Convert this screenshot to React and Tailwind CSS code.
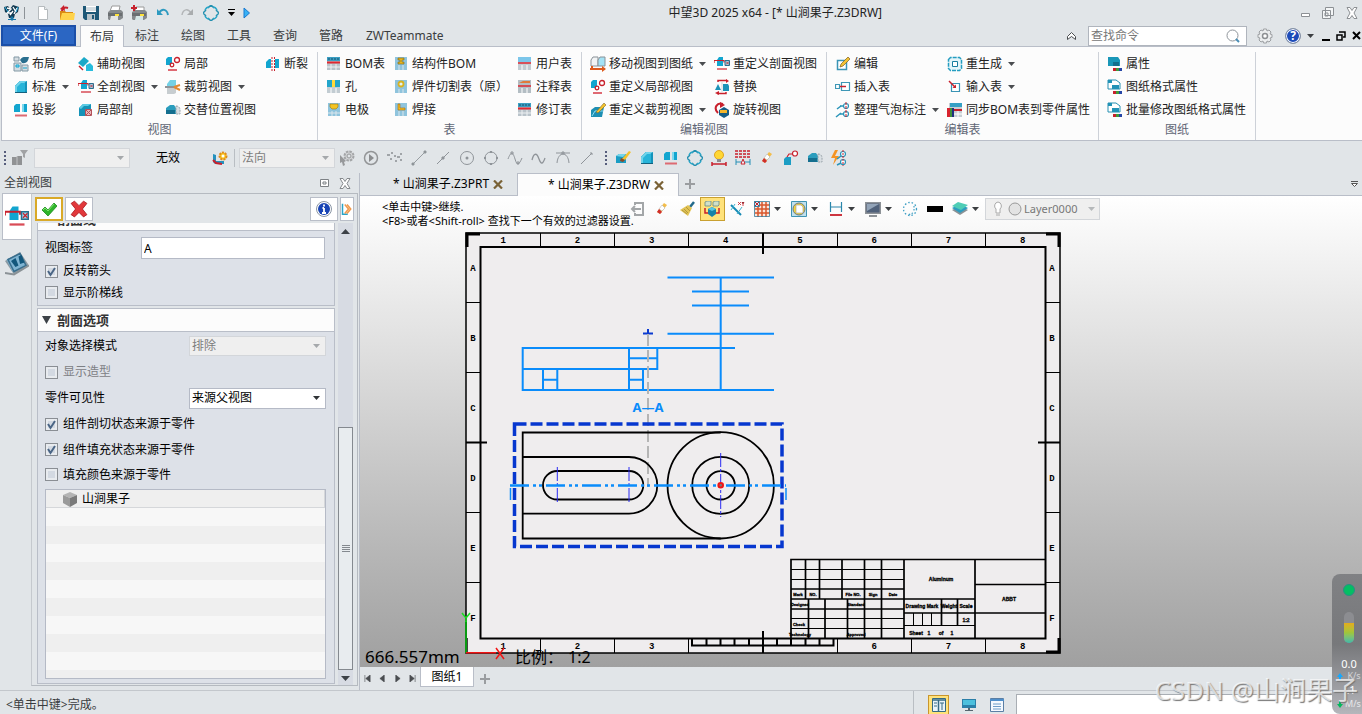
import { Fragment } from "react";

const B = "#12a5cf";
const N = "#2a6f8f";
const R = "#c8202c";
const G = "#8f9499";

// 16x16 icon drawings
const glyphs = {
  logo: (
    <>
      <path d="M0 2l4-1 2 3 3-4 6 2-1 5-3 2-1 4H5L4 9 1 7z" fill="#123a52" />
      <path d="M3 3l4 1-4 4 5 0M9 2l3 5M13 3l-3 6M6 10l3-4" stroke="#fff" strokeWidth="1.3" fill="none" />
      <path d="M4 14.500h8M7 12h2v3H7z" stroke="#1b78a8" fill="#1b78a8" />
      <path d="M1 2l3 5M14 2l-2 5" stroke="#39b7e6" />
    </>
  ),
  file: (
    <>
      <path d="M3.500 1.500h6l3 3v10h-9z" fill="#fff" stroke="#b5babd" />
      <path d="M9.500 1.500v3h3" fill="#e9edef" stroke="#b5babd" />
    </>
  ),
  open: (
    <>
      <path d="M1 6h5l1 1h7v8H1z" fill="#d98a12" />
      <path d="M1 15l2-7h13l-1 7z" fill="#ffd34a" />
      <path d="M3 6c0-3 3-4 6-3" stroke={R} strokeWidth="2" fill="none" />
      <path d="M5 0L1 4l5 2z" fill={R} />
    </>
  ),
  save: (
    <>
      <path d="M0 1h16v14H2l-2-2z" fill="#1d5877" />
      <path d="M3 1h10v6H3z" fill="#fff" />
      <path d="M3 3h10M3 5h10" stroke="#a8bac4" />
      <path d="M4 9h8v6H4z" fill="#b9c5cb" />
      <path d="M9 10h2v4H9z" fill="#1d5877" />
    </>
  ),
  print: (
    <>
      <path d="M5 1h8l-1 5H3z" fill="#fff" stroke="#9a9a9a" />
      <path d="M1 7l3-2h10l2 2v6l-3 2H2l-1-1z" fill="#85898c" />
      <path d="M1 8h14v3H1z" fill="#6a6e71" />
      <path d="M4 11h7v4H3z" fill="#e4e4e4" />
      <path d="M8 9h4v2H8z" fill="#ffe23a" />
    </>
  ),
  printAdd: (
    <>
      <path d="M5 2h8v4H4z" fill="#fff" stroke="#9a9a9a" />
      <path d="M1 7l3-2h10l2 2v6l-3 2H2l-1-1z" fill="#85898c" />
      <path d="M1 8h14v3H1z" fill="#6a6e71" />
      <path d="M5 11h7v4H4z" fill="#d6e6e6" />
      <path d="M9 9h4v2H9z" fill="#ffe23a" />
      <path d="M0 3h6M3 0v6" stroke={R} strokeWidth="2" />
    </>
  ),
  undo: (
    <>
      <path d="M4 8c3-5 8-4 9 2" stroke="#2d9ac0" strokeWidth="2" fill="none" />
      <path d="M2 4v6h6z" fill="#2d9ac0" />
    </>
  ),
  redo: (
    <>
      <path d="M12 8C9 3 4 4 3 10" stroke="#b3b6b8" strokeWidth="1.500" fill="none" />
      <path d="M14 4v6H8z" fill="#a9acae" />
    </>
  ),
  around: (
    <>
      <path d="M5 3l3-3 3 3M13 5l3 3-3 3M5 13l3 3 3-3M3 5L0 8l3 3" stroke="#2490b0" strokeWidth="1.500" fill="none" />
      <path d="M2 5c1-2 2-3 4-3M14 5c-1-2-2-3-4-3M2 11c1 2 2 3 4 3M14 11c-1 2-2 3-4 3" stroke="#2aa5c7" strokeWidth="1.500" fill="none" />
    </>
  ),
  play: <path d="M5 3l5.500 5L5 13z" fill="#38b2f5" stroke="#1878d0" />,
  layout: (
    <>
      <path d="M1 1h5v4H1zM1 7h7v8H1zM9 9h6v6H9z" fill="#d5dde2" stroke="#8298a4" />
      <path d="M7 4c2-4 5-3 9-3-1 5-3 7-7 6z" fill={N} />
      <path d="M3 9h3v2H3zM10 12h4" stroke={B} fill="#9adcf0" />
    </>
  ),
  view: (
    <>
      <path d="M2 7l5-5h7v12H2z" fill="#1593ba" />
      <path d="M2 7l5-5h5v11H2z" fill="#27b4d9" />
      <path d="M2 7l5-5h7l-3 2H8L4 8v5H2z" fill="#6fd3ea" />
      <path d="M2 13.500h12" stroke="#13617e" />
    </>
  ),
  project: (
    <>
      <path d="M1 4l2-2h4v8H1z" fill={B} />
      <path d="M9 2h5v8H9z" fill={B} />
      <path d="M9 2h2v8H9z" fill="#7fd9ee" />
      <path d="M2 13.500h12" stroke="#dd6a72" strokeWidth="2" />
    </>
  ),
  aux: (
    <>
      <path d="M0 7l6-6 5 4-6 6z" fill="#1ba9c8" />
      <path d="M8 9l4-2 3 3v5H8z" fill="#27bcdc" />
      <path d="M1 10l4 4" stroke={R} strokeWidth="1.500" />
    </>
  ),
  section: (
    <>
      <path d="M3 4l2-3h4v9H3z" fill={B} />
      <path d="M0 7V4.500h10v2" stroke={R} strokeWidth="1.200" fill="none" />
      <path d="M11 4.500h4.500v5H11z" fill="#9fd3e6" stroke={N} />
      <path d="M12 5.500l3 3m0-3l-3 3" stroke={R} strokeWidth=".8" />
      <path d="M3 13h10" stroke="#d94c57" strokeWidth="1.500" />
    </>
  ),
  cutout: (
    <>
      <path d="M1 6l4-4h8v12H1z" fill="#1593b8" />
      <path d="M1 6l4-4h8l-3 2H6L3 7z" fill="#5bcbe4" />
      <path d="M7.500 7.500h6v6h-6z" fill="#e9b9bc" stroke="#b4525a" />
      <path d="M8 8l5 5m0-5l-5 5" stroke="#b4525a" />
    </>
  ),
  detail: (
    <>
      <path d="M1 3l2-2h4v8H1z" fill={B} />
      <circle cx="12" cy="4" r="2.500" fill="#fff" stroke={R} strokeWidth="1.300" />
      <circle cx="7" cy="9" r="1.800" fill="#fff" stroke={R} strokeWidth="1.300" />
      <path d="M3 14h9" stroke="#dc5962" strokeWidth="1.800" />
    </>
  ),
  clip: (
    <>
      <path d="M2 5l3-4h6v6H2z" fill="#73d1e6" />
      <path d="M2 9h9v5l-2 1H2z" fill="#c7cdd0" />
      <path d="M0 8h10" stroke="#6b7176" strokeWidth="1.500" />
      <path d="M9 8l6-2M9 8l6 3" stroke="#e08a35" strokeWidth="2" />
    </>
  ),
  alternate: (
    <>
      <path d="M1 12V6l4-3h4l2 3v6z" fill="#2b9dbd" />
      <path d="M1 12V8h9v4z" fill="#156f8f" />
      <path d="M11 4c3 0 4 2 4 4v4h-4z" fill="#d9dfe3" stroke="#9aa4aa" strokeDasharray="2 1" />
    </>
  ),
  broken: (
    <>
      <path d="M1 6l3-3h2v9H1z" fill={B} />
      <path d="M10 3h4v9h-4z" fill={B} />
      <path d="M7 1v14M9.500 1v14" stroke={R} strokeDasharray="2 1" />
    </>
  ),
  bom: (
    <>
      <path d="M1 1h13v13H1z" fill="#b9c3ca" />
      <path d="M1 1h13v4H1z" fill="#3b9ec2" />
      <path d="M3 2v2M6 2v2M9 2v2M12 2v2" stroke="#14516d" />
      <path d="M1 6.500h13" stroke="#e12730" strokeWidth="2" />
      <path d="M5 8v6M10 8v6M1 11h13" stroke="#eef1f3" />
    </>
  ),
  hole: (
    <>
      <path d="M1 1h13v13H1z" fill="#c2ccd2" />
      <path d="M1 1h13v7H1z" fill="#22a5cb" />
      <path d="M6 1h3v7H6z" fill="#ffd93a" />
      <path d="M5 9v5M10 9v5" stroke="#fff" />
    </>
  ),
  electrode: (
    <>
      <path d="M2 1h12v13H2z" fill="#8fc4dd" />
      <path d="M4 2h8v3l-2 2H6L4 5z" fill="#f3c322" stroke="#9b7a12" strokeWidth=".6" />
      <path d="M6 9v5M10 9v5M2 11h12" stroke="#dbe6ec" />
    </>
  ),
  weld: (
    <>
      <path d="M2 1h12v13H2z" fill="#8fc4dd" />
      <path d="M5 2v6h7V6H7V2z" fill="#f5bd1e" stroke="#a56b14" strokeWidth=".6" />
      <path d="M6 9v5M10 9v5" stroke="#dbe6ec" />
    </>
  ),
  struct: (
    <>
      <path d="M2 1h12v13H2z" fill="#8fc4dd" />
      <path d="M5 2h6v2H9v2h2v2H5V6h2V4H5z" fill="#e6b51f" stroke="#7d6614" strokeWidth=".6" />
      <path d="M6 9v5M10 9v5" stroke="#dbe6ec" />
    </>
  ),
  cutlist: (
    <>
      <path d="M2 1h12v13H2z" fill="#8fc4dd" />
      <circle cx="8" cy="5" r="2.500" fill="#dff1f8" stroke="#d8b321" strokeWidth="1.800" />
      <path d="M6 10v4M10 10v4" stroke="#dbe6ec" />
    </>
  ),
  table: (
    <>
      <path d="M1 1h13v13H1z" fill="#c3ccd2" />
      <path d="M1 1h13v5H1z" fill="#7cc6ea" />
      <path d="M1 7h13" stroke="#e12730" strokeWidth="1.500" />
      <path d="M5 9v5M10 9v5" stroke="#fff" />
    </>
  ),
  note: (
    <>
      <path d="M1 1h13v13H1z" fill="#b3bdc3" />
      <path d="M2 4l4-2 7 0v2H2z" fill="#e07a39" />
      <path d="M1 7h13" stroke="#e12730" strokeWidth="1.500" />
      <path d="M5 9v5M10 9v5" stroke="#fff" />
    </>
  ),
  moveView: (
    <>
      <path d="M1 4l2-3h5v9H1z" fill="#f2f4f5" stroke="#8a9298" />
      <path d="M8 4l2-3h5v9H8z" fill="#a4e2f5" stroke="#8a9298" />
      <path d="M2 10v3M0 13h15" stroke="#dd5a1d" strokeWidth="2" />
      <path d="M12 10l4 3-4 3z" fill="#dd5a1d" />
    </>
  ),
  pen: (
    <>
      <path d="M1 8l4-3h9l-2 10H1z" fill="#1e8fb3" />
      <path d="M2 14l3-5h8" stroke="#8bdcf0" fill="none" />
      <path d="M6 10l8-9 2 2-8 8z" fill="#f4c22c" stroke="#7d6a2b" strokeWidth=".6" />
    </>
  ),
  replace: (
    <>
      <path d="M1 11l3-6 3 6zM9 5h5l1 2v5H9z" fill="#1b93b8" />
      <path d="M4 3V1.500h9M12 13v1.500H3" stroke={R} strokeWidth="1.500" fill="none" />
      <path d="M12 0l3 2-3 2zM5 12l-4 2 4 2z" fill={R} />
      <path d="M8 3v10" stroke="#d0d7db" />
    </>
  ),
  rotate: (
    <>
      <path d="M9 2C3 0-1 6 4 11" stroke={R} strokeWidth="2" fill="none" />
      <path d="M6 0l5 3-5 3z" fill={R} />
      <path d="M5 8l5-3 5 3v5l-5 3-5-3z" fill="#155d86" />
      <path d="M6 8h7v3H6z" fill="#f4b62a" />
    </>
  ),
  edit: (
    <>
      <path d="M2.500 4.500h9v9h-9z" fill="#fff" stroke="#3a94b5" strokeWidth="1.500" />
      <path d="M5 11l1-3 7-7 2 2-7 7z" fill="#f2c233" stroke="#7d5e20" strokeWidth=".7" />
    </>
  ),
  insert: (
    <>
      <path d="M.500 5.500h4v4h-4zM6.500 3.500h8v8h-8z" fill="#fff" stroke="#3e97b6" strokeWidth="1.200" />
      <path d="M5 7.500h6" stroke={R} strokeWidth="1.500" />
    </>
  ),
  bubble: (
    <>
      <path d="M2 7l4-3M1 15l5-4" stroke="#2a94b8" strokeWidth="1.500" />
      <path d="M5 4h4M5 12h4" stroke="#2a94b8" strokeWidth="1.500" />
      <circle cx="11" cy="4" r="2.500" fill="#fff" stroke="#2a94b8" strokeWidth="1.200" />
      <circle cx="11" cy="12" r="2.500" fill="#fff" stroke="#2a94b8" strokeWidth="1.200" />
      <path d="M11 0v16" stroke={R} strokeDasharray="3 1" />
    </>
  ),
  regen: (
    <>
      <path d="M1.500 3.500l2-2h9l2 2v9l-2 2h-9l-2-2z" fill="#e4f5fa" stroke="#249dc0" strokeWidth="1.500" strokeDasharray="4 1" />
      <path d="M5.500 5.500h5v5h-5z" fill="#fff" stroke="#187ea0" />
    </>
  ),
  input: (
    <>
      <path d="M4.500 4.500h8v8h-8z" fill="#fff" stroke="#3a94b5" strokeWidth="1.200" />
      <path d="M2 2l6 6" stroke={R} strokeWidth="1.500" fill="none" />
      <path d="M9 9V5.500L5.500 9z" fill={R} />
    </>
  ),
  sync: (
    <>
      <path d="M2 1h13v14H2z" fill="#c6ced3" />
      <path d="M3 1h12v4H3z" fill="#34a0c4" />
      <path d="M0 6h3v9H0z" fill="#d8232e" />
      <path d="M3 6h2v9H3z" fill="#3e8f3a" />
      <path d="M5 6h2v9H5z" fill="#202f80" />
      <path d="M7 8h8" stroke={R} strokeWidth="2" />
      <path d="M11 9v6M7 12h8" stroke="#fff" />
    </>
  ),
  prop: (
    <>
      <path d="M1 1h10l2 3v6H1z" fill="#1a97b8" />
      <path d="M6 6h6v4H6z" fill="#136f8c" />
      <path d="M6 12h3v3H6z" fill={R} />
      <path d="M9 12h3v3H9z" fill="#3f9a3a" />
      <path d="M12 12h3v3h-3z" fill="#2646a6" />
    </>
  ),
  sheetProp: (
    <>
      <path d="M1 1h8l4 3v6H1z" fill="#fff" stroke="#2790b2" />
      <path d="M1 1h4v3H1zM5 6h7v4H5z" fill="#2192b6" />
      <path d="M6 12h3v3H6z" fill={R} />
      <path d="M9 12h3v3H9z" fill="#3f9a3a" />
      <path d="M12 12h3v3h-3z" fill="#2646a6" />
    </>
  ),
  filter: (
    <>
      <path d="M0 7h5v8H0zM5 6h5v9H5z" fill="#909294" />
      <path d="M5 6v9" stroke="#c0c2c4" />
      <path d="M8 0h8l-3 4v4l-2-1V4z" fill="#a0a2a4" />
    </>
  ),
  attach: (
    <>
      <path d="M1 4l3 1v6h8v3H3l-2-2z" fill="#2591bd" />
      <path d="M1 10l3 3 6 1" stroke={R} strokeWidth="2" fill="none" />
      <circle cx="11" cy="6" r="3.500" fill="#f8c41f" stroke="#e08a1c" strokeWidth="2" strokeDasharray="2 1" />
      <circle cx="11" cy="6" r="1.500" fill="#fff" />
    </>
  ),
  gearCursor: (
    <>
      <circle cx="10" cy="6" r="4.500" fill="#d2d4d6" stroke="#a3a5a7" strokeWidth="2" strokeDasharray="2.500 1" />
      <circle cx="10" cy="6" r="2" fill="#e1e5e8" stroke="#97999b" />
      <path d="M1 5l6 6-2 1 1 3-2 1-1-4-2 1z" fill="#97999b" />
    </>
  ),
  circPlay: (
    <>
      <circle cx="8" cy="8" r="6.500" fill="none" stroke="#939597" strokeWidth="1.500" />
      <path d="M6 4l5 4-5 4z" fill="#8b8d8f" />
    </>
  ),
  dots: <path d="M0 5h3M3 9h2M7 6h2M8 11h2M10 7h3M13 4h2M13 10h2M4 3h2" stroke="#a0a4a8" strokeWidth="2" />,
  line: <path d="M2 14L14 2M1 13h2v2H1zM13 1h2v2h-2z" stroke={G} fill={G} strokeWidth=".9" />,
  midpoint: <path d="M2 14L14 2M7 7h2v2H7z" stroke={G} fill={G} />,
  center: (
    <>
      <circle cx="8" cy="8" r="6.500" fill="none" stroke={G} />
      <circle cx="8" cy="8" r="1.500" fill={G} />
    </>
  ),
  quad: (
    <>
      <circle cx="8" cy="8" r="6" fill="none" stroke={G} />
      <path d="M7 1h2v2H7zM7 13h2v2H7zM1 7h2v2H1zM13 7h2v2h-2z" fill={G} />
    </>
  ),
  wave: <path d="M1 9c3-8 5-7 7 0s4 6 7-1M4 2h2v2H4zM10 12h2v2h-2z" stroke={G} fill="none" />,
  wave2: <path d="M1 10c2-8 5-7 7-1s4 5 6-1" stroke={G} strokeWidth="1.300" fill="none" />,
  arcTop: <path d="M1 3h14M2 13c1-12 11-12 12 0M7 2h2v2H7z" stroke={G} fill="none" />,
  slash: <path d="M2 14L13 3M11 3h2v2M6 9l1 1" stroke={G} fill="none" />,
  paint: (
    <>
      <path d="M1 6l3-2h7v9H1z" fill="#1a9dc4" />
      <path d="M1 6l3-2h7l-3 3z" fill="#75d4e9" />
      <path d="M7 9l7-8 2 1-6 8z" fill="#f4c22c" />
      <path d="M6 8l4 2-2 2-3-1z" fill="#8b4a24" />
    </>
  ),
  bulb: (
    <>
      <circle cx="8" cy="5" r="4.500" fill="#ffd734" stroke="#e0a520" />
      <path d="M6 9h4v3H6z" fill="#8b8e90" />
      <path d="M1 12v4M15 12v4M1 14h14" stroke={R} strokeWidth="1.500" />
    </>
  ),
  dimGrid: (
    <>
      <path d="M0 1h16M0 4h16M0 7h16" stroke={R} strokeWidth="1.500" strokeDasharray="3 1" />
      <path d="M1 9v6M15 9v6M1 12h14" stroke="#268fb5" />
      <path d="M6 14l2-5 2 5z" fill="#fff" stroke={R} />
    </>
  ),
  eraser: (
    <>
      <path d="M3 11l7-9 3 2-7 9z" fill="#f3bd49" />
      <path d="M5 8l3-4 3 3-3 3z" fill="#fff" stroke="#a8a8a8" strokeWidth=".5" />
      <path d="M3 11l2-3 3 3-2 2z" fill="#cf2d2d" />
    </>
  ),
  tagBox: (
    <>
      <path d="M1 9l2-2h5v8H1z" fill="#1b9dc4" />
      <path d="M4 7l2-3h4" stroke={R} strokeWidth="1.200" fill="none" />
      <circle cx="12" cy="3.500" r="2.500" fill="#fff" stroke={R} strokeWidth="1.200" />
    </>
  ),
  flash: (
    <>
      <path d="M4 0L0 8h4l-2 7 6-9H4l3-6z" fill="#f59423" />
      <circle cx="12" cy="4" r="2.500" fill="#fff" stroke="#2a94b8" strokeWidth="1.200" />
      <circle cx="12" cy="12" r="2.500" fill="#fff" stroke="#2a94b8" strokeWidth="1.200" />
      <path d="M6 9l4-3M6 15l4-2" stroke="#2a94b8" strokeWidth="1.500" />
      <path d="M12 0v16" stroke={R} strokeDasharray="2 1" />
    </>
  ),
  exit: <path d="M6 4V2h8v12H6v-2M12 8H4M6 5L3 8l3 3" stroke="#a3a6a8" strokeWidth="2" fill="none" />,
  broom: (
    <>
      <path d="M15 1l-4 5" stroke="#236a8a" strokeWidth="2.500" />
      <path d="M9 4l4 3-4 8-8-6z" fill="#e3c354" />
      <path d="M3 9l5 4M5 8l4 4M7 6l4 4" stroke="#a58f3a" strokeWidth=".8" />
    </>
  ),
  cubes: (
    <>
      <path d="M1 1l2-1h4v4L6 5H1zM9 1l2-1h4v4l-1 1H9z" fill="#cfe0c9" stroke="#688a80" strokeWidth=".8" />
      <path d="M4 8l4-2 4 2v5l-4 3-4-3z" fill="#1783a8" />
      <path d="M4 8l4-2 4 2-4 2z" fill="#58c6e0" />
      <path d="M1 7v5h3M15 7v5h-3" stroke={R} strokeWidth="1.500" fill="none" />
    </>
  ),
  axes: (
    <>
      <path d="M2 4l10 10" stroke="#1689b4" strokeWidth="2" />
      <path d="M2 9l4-6M8 13l5-7" stroke="#42b0ce" />
      <path d="M9 1l3 3m0-3L9 4M13 1l1 2 1-2M14 3v2" stroke={R} strokeWidth=".8" />
    </>
  ),
  grid: (
    <>
      <path d="M0 0h16v16H0z" fill="#fbe6dc" />
      <path d="M1 4h15M1 8h15M1 12h15M4 1v15M8 1v15M12 1v15" stroke="#d8572c" strokeWidth="1.500" />
      <path d="M.500 .500h5v5h-5z" fill="#d7ecf4" stroke="#3a7fa0" />
      <path d="M1 1l4 4m0-4L1 5" stroke={R} />
      <path d="M.500 .500h15v15H.500z" stroke="#3a7fa0" fill="none" strokeWidth=".8" />
    </>
  ),
  zoomPage: (
    <>
      <path d="M.500 .500h15v15H.500z" fill="#bfe0ee" stroke="#3f93b3" />
      <circle cx="8" cy="8" r="6" fill="#f4d53f" stroke="#6e7b82" />
      <path d="M5 4h5l2 2v6H5z" fill="#fff" stroke="#999" strokeWidth=".6" />
    </>
  ),
  dimension: (
    <>
      <path d="M2.500 1v10M13.500 1v10M3 6h10" stroke="#2a86ab" strokeWidth="1.200" />
      <path d="M2 14h12" stroke={R} strokeWidth="1.800" />
    </>
  ),
  monitor: (
    <>
      <path d="M0 1h16v12H0z" fill="#8d9297" />
      <path d="M1.500 2.500h13v9h-13z" fill="#50617a" />
      <path d="M2 3h12l-12 7z" fill="#93a4b8" />
      <path d="M4 15h8" stroke="#8d9297" strokeWidth="2" />
    </>
  ),
  dotRing: (
    <>
      <circle cx="8" cy="8" r="6.500" fill="none" stroke="#3f9fc4" strokeWidth="1.300" strokeDasharray="1.500 2" />
      <path d="M12 5v6M11 12L6 14" stroke="#3f9fc4" strokeWidth="1.200" strokeDasharray="1.500 1.500" />
    </>
  ),
  black: <path d="M0 5h16v6H0z" fill="#000" />,
  layers: (
    <>
      <path d="M0 9l8-4 8 4-8 5z" fill="#8b9296" />
      <path d="M0 7l8-4 8 4-8 5z" fill="#2d9dc0" />
      <path d="M0 5l6-4 10 3-7 5z" fill="#4fcdb6" />
    </>
  ),
  cube: (
    <>
      <path d="M1 4l7-3 7 3-7 3z" fill="#b4b4b4" />
      <path d="M1 4l7 3v9l-7-4z" fill="#9a9a9a" />
      <path d="M15 4L8 7v9l7-4z" fill="#7a7a7a" />
    </>
  ),
  check: (
    <>
      <path d="M1 9l3-3 3 3 6-7 3 3-9 10z" fill="#2fb52b" stroke="#1c8a1f" strokeWidth=".8" />
      <path d="M2 9l2-2 3 3 6-7" stroke="#7de56b" fill="none" />
    </>
  ),
  cross: (
    <path d="M1 3l3-2 4 4 4-4 3 2-4 5 4 5-3 2-4-4-4 4-3-2 4-5z" fill="#e2383b" stroke="#b01f25" strokeWidth=".8" />
  ),
  info: (
    <>
      <circle cx="8" cy="8" r="7.500" fill="#fff" stroke="#8b96a5" />
      <circle cx="8" cy="8" r="6" fill="#1844b4" />
      <path d="M8 7v5M6 12h4M6.500 7H8M8 3.500v2" stroke="#fff" strokeWidth="1.800" />
    </>
  ),
  expand: (
    <>
      <path d="M2 1v14h7" stroke="#2aa4c8" strokeWidth="2" fill="none" />
      <path d="M5 2l5 6-5 6M8 2l5 6-5 6" stroke="#f09a4e" strokeWidth="2" fill="none" />
    </>
  ),
  book: (
    <>
      <path d="M0 6l10-6 6 9-10 6z" fill="#8b9aa3" />
      <path d="M1 5l9-4 4 8-9 4z" fill="#7fb4d2" />
      <path d="M2 5l8-4 4 8-8 4z" fill="none" stroke="#3a6f8e" />
      <path d="M4 6l3-2 2 5-2 1zM9 3l2-1 2 5-3 1z" fill="#12577c" />
      <path d="M0 14l6 1 10-6" stroke="#8b9296" strokeWidth="1.200" fill="none" />
    </>
  ),
  pcStatus: (
    <>
      <path d="M1 2h14v9H1z" fill="#2b7fa8" />
      <path d="M2 3h12v5H2z" fill="#4cc0dd" />
      <path d="M7 11h2v2h3v1H4v-1h3z" fill="#56666f" />
    </>
  ),
  listStatus: (
    <>
      <path d="M1.500 1.500h13v13h-13z" fill="#f4f9ff" stroke="#5b7fa5" />
      <path d="M1 3h14" stroke="#4f8fcb" strokeWidth="2" />
      <path d="M4 7h8M4 9.500h8M4 12h8" stroke="#6d9cc8" />
    </>
  ),
  treeStatus: (
    <>
      <path d="M1.500 1.500h13v13h-13z" fill="#e8f4f9" stroke="#356a82" />
      <path d="M2 3h12M7.500 3v11" stroke="#356a82" strokeWidth="1.500" />
      <path d="M3 6h3M3 9h3M9 6h4M11 6v7" stroke="#356a82" />
    </>
  ),
};

function Icon({ name, className = "h-4 w-4" }) {
  return (
    <svg viewBox="0 0 16 16" className={`shrink-0 ${className}`} aria-hidden="true">
      {glyphs[name]}
    </svg>
  );
}

function Arrow({ className = "text-[#3c3f42]" }) {
  return (
    <svg viewBox="0 0 7 4" className={`h-1 w-[7px] shrink-0 ${className}`} aria-hidden="true">
      <path d="M0 0h7L3.500 4z" fill="currentColor" />
    </svg>
  );
}

const quickAccess = ["file", "open", "save", "print", "printAdd", "undo", "redo", "around"];
const tabs = ["标注", "绘图", "工具", "查询", "管路"];

const ribbon = [
  {
    title: "视图",
    width: "w-[316px]",
    pad: "pl-[11px]",
    cols: [
      { w: "w-[65px]", items: [["layout", "布局"], ["view", "标准", true], ["project", "投影"]] },
      { w: "w-[87px]", items: [["aux", "辅助视图"], ["section", "全剖视图", true], ["cutout", "局部剖"]] },
      { w: "w-[100px]", items: [["detail", "局部"], ["clip", "裁剪视图", true], ["alternate", "交替位置视图"]] },
      { w: "w-12", items: [["broken", "断裂"]] },
    ],
  },
  {
    title: "表",
    width: "w-[264px]",
    pad: "pl-2",
    cols: [
      { w: "w-[67px]", items: [["bom", "BOM表"], ["hole", "孔"], ["electrode", "电极"]] },
      { w: "w-[124px]", items: [["struct", "结构件BOM"], ["cutlist", "焊件切割表（原）"], ["weld", "焊接"]] },
      { w: "w-[60px]", items: [["table", "用户表"], ["note", "注释表"], ["bom", "修订表"]] },
    ],
  },
  {
    title: "编辑视图",
    width: "w-[245px]",
    pad: "pl-2",
    cols: [
      { w: "w-[124px]", items: [["moveView", "移动视图到图纸", true], ["detail", "重定义局部视图"], ["pen", "重定义裁剪视图", true]] },
      { w: "w-[108px]", items: [["section", "重定义剖面视图"], ["replace", "替换"], ["rotate", "旋转视图"]] },
    ],
  },
  {
    title: "编辑表",
    width: "w-[272px]",
    pad: "pl-2",
    cols: [
      { w: "w-28", items: [["edit", "编辑"], ["insert", "插入表"], ["bubble", "整理气泡标注", true]] },
      { w: "w-[144px]", items: [["regen", "重生成", true], ["input", "输入表", true], ["sync", "同步BOM表到零件属性"]] },
    ],
  },
  {
    title: "图纸",
    width: "w-[157px]",
    pad: "pl-2",
    cols: [{ w: "w-[144px]", items: [["prop", "属性"], ["sheetProp", "图纸格式属性"], ["sheetProp", "批量修改图纸格式属性"]] }],
  },
];

const snapTools = ["gearCursor", "circPlay", "dots", "line", "midpoint", "center", "quad", "wave", "wave2", "arcTop", "slash"];
const viewTools = ["paint", "view", "project", "around", "bulb", "dimGrid", "eraser", "tagBox", "alternate", "flash"];

function TitleBar() {
  return (
    <header className="flex h-[25px] items-center pl-1">
      <div className="flex flex-1 items-center">
        <Icon name="logo" />
        <span className="ml-1 h-3 w-px bg-[#8d9297]" />
        <div className="ml-1.5 flex items-center">
          {quickAccess.map((name) => (
            <button key={name} aria-label={name} className="flex h-6 w-6 items-center justify-center">
              <Icon name={name} />
            </button>
          ))}
          <button aria-label="more" className="flex w-4 flex-col items-center gap-0.5 text-black">
            <span className="h-px w-[7px] bg-black" />
            <Arrow className="text-black" />
          </button>
          <button aria-label="play" className="flex w-4 justify-center">
            <Icon name="play" />
          </button>
        </div>
      </div>
      <h1 className="shrink-0">中望3D 2025 x64 - [* 山涧果子.Z3DRW]</h1>
      <div className="flex w-[480px] items-center justify-end gap-3 pr-1 text-[#8c9094]">
        <button aria-label="minimize" className="mt-1">
          <svg viewBox="0 0 9 4" className="h-1 w-[9px]"><path d="M.500 .500h8v3h-8z" fill="#fff" stroke="currentColor" /></svg>
        </button>
        <button aria-label="restore">
          <svg viewBox="0 0 12 12" className="h-3 w-3"><path d="M3.500 .500h8v8h-8zM.500 3.500h8v8h-8zM3 6h3v3H3z" fill="#f4f6f7" stroke="currentColor" /></svg>
        </button>
        <button aria-label="close">
          <svg viewBox="0 0 12 12" className="h-3 w-3"><path d="M1 .500h3l2 3 2-3h3L8 6l3 5.500H8l-2-3-2 3H1L4 6z" fill="#fff" stroke="currentColor" /></svg>
        </button>
      </div>
    </header>
  );
}

function TabBar() {
  return (
    <nav className="flex h-[21px] items-stretch pl-px text-[#3a3d40]">
      <button className="mr-1 w-[75px] border-2 border-[#1b4fa8] bg-[#2b66c3] text-white">文件(F)</button>
      <button className="relative z-10 -mb-px w-11 border border-b-0 border-[#b9bec8] bg-[#fcfcfc]">布局</button>
      {tabs.map((tab) => (
        <button key={tab} className="w-[46px]">
          {tab}
        </button>
      ))}
      <button className="px-3">ZWTeammate</button>
      <div className="ml-auto flex items-center">
        <button aria-label="collapse" className="mr-3">
          <svg viewBox="0 0 9 8" className="h-2 w-[9px]"><path d="M.500 4.500l4-4 4 4v3l-4-3-4 3z" fill="#fff" stroke="#4a4d50" /></svg>
        </button>
        <label className="flex h-5 w-[159px] items-center border border-[#b0b5bd] bg-white pr-1.5">
          <input aria-label="查找命令" placeholder="查找命令" className="min-w-0 flex-1 px-0.5 outline-none placeholder:text-[#777]" />
          <svg viewBox="0 0 14 14" className="h-3.5 w-3.5"><circle cx="6.500" cy="6.500" r="5.500" fill="none" stroke="#8f959b" /><path d="M10 10l3 3" stroke="#4a8db5" strokeWidth="2" /></svg>
        </label>
        <button aria-label="settings" className="ml-2.5">
          <svg viewBox="0 0 16 16" className="h-4 w-4">
            <path
              d="M6.500 1h3l.5 2 2-1 2 2-1 2 2 .5v3l-2 .5 1 2-2 2-2-1-.5 2h-3L6 13l-2 1-2-2 1-2-2-.5v-3L3 6 2 4l2-2 2 1z"
              fill="#eceeef"
              stroke="#9c9fa2"
            />
            <circle cx="8" cy="8" r="2.500" fill="#fff" stroke="#8d9093" strokeWidth="1.500" />
          </svg>
        </button>
        <button aria-label="help" className="ml-3 flex items-center gap-1.5">
          <span className="flex h-4 w-4 items-center justify-center rounded-full border border-[#8b96a5] bg-[#1d4bb8] text-[12px] font-bold text-white ring-1 ring-white ring-inset">?</span>
          <Arrow />
        </button>
        <div className="ml-2 flex items-center gap-1.5 pr-px text-black">
          <svg viewBox="0 0 8 10" className="h-2.5 w-2"><path d="M0 9h8" stroke="currentColor" strokeWidth="2" /></svg>
          <svg viewBox="0 0 10 10" className="h-2.5 w-2.5"><path d="M3 1h6v5H7M1 4h5v5H1z" fill="none" stroke="currentColor" strokeWidth="1.500" /></svg>
          <svg viewBox="0 0 9 9" className="h-[9px] w-[9px]"><path d="M1 1l7 7M8 1L1 8" stroke="currentColor" strokeWidth="2" /></svg>
        </div>
      </div>
    </nav>
  );
}

function Ribbon() {
  return (
    <section className="ml-px flex h-[95px] border border-r-0 border-[#b9bec8] bg-[#fcfcfc] pt-[5px]">
      {ribbon.map((group) => (
        <div key={group.title} className={`flex shrink-0 flex-col border-r border-[#cdd1d8] ${group.width}`}>
          <div className={`flex ${group.pad}`}>
            {group.cols.map((col, i) => (
              <div key={i} className={`shrink-0 ${col.w}`}>
                {col.items.map(([icon, label, more]) => (
                  <button key={label} className="flex h-[23px] items-center whitespace-nowrap">
                    <Icon name={icon} />
                    <span className="ml-[3px]">{label}</span>
                    {more && <Arrow className="ml-1.5 text-[#4a4d50]" />}
                  </button>
                ))}
              </div>
            ))}
          </div>
          <h2 className="text-center leading-[18px] text-[#5f6675]">{group.title}</h2>
        </div>
      ))}
    </section>
  );
}

function Grip() {
  return (
    <svg viewBox="0 0 2 14" className="h-3.5 w-0.5 shrink-0" aria-hidden="true">
      <path d="M1 0v14" stroke="#565d7c" strokeWidth="2" strokeDasharray="2 2" />
    </svg>
  );
}

function Picker({ label, value, disabled, id, className }) {
  return (
    <div className={`relative flex items-center ${className}`}>
      <select
        id={id}
        aria-label={label}
        disabled={disabled}
        defaultValue={value}
        className="h-full w-full appearance-none border border-[#b5bac6] bg-white px-0.5 outline-none disabled:border-[#d3d6da] disabled:bg-[#efefef] disabled:text-[#7d7d7d]"
      >
        <option>{value}</option>
      </select>
      <Arrow className={`pointer-events-none absolute right-1.5 ${disabled ? "text-[#a5a8ab]" : "text-[#303336]"}`} />
    </div>
  );
}

function ToolRow() {
  return (
    <section className="flex h-8 items-center pl-1 pt-0.5">
      <Grip />
      <button aria-label="filter" className="ml-1.5">
        <Icon name="filter" />
      </button>
      <Picker label="过滤器" value="" disabled className="ml-1.5 h-5 w-24" />
      <span className="w-[82px] pl-[26px] text-black">无效</span>
      <button aria-label="attach">
        <Icon name="attach" />
      </button>
      <span className="ml-1.5 mr-1 h-[18px] w-px bg-[#b9bec3]" />
      <Picker label="方向" value="法向" disabled className="h-5 w-24" />
      {snapTools.map((name) => (
        <button key={name} aria-label={name} className="flex w-6 justify-center">
          <Icon name={name} />
        </button>
      ))}
      <span className="ml-1.5 mr-1 flex">
        <Grip />
      </span>
      {viewTools.map((name) => (
        <button key={name} aria-label={name} className="flex w-6 justify-center">
          <Icon name={name} />
        </button>
      ))}
    </section>
  );
}

function Check({ label, checked, disabled, className = "h-[26px]" }) {
  return (
    <label className={`flex items-center gap-[5px] ${disabled ? "text-[#7d8085]" : "text-black"} ${className}`}>
      <span className="relative flex h-[13px] w-[13px]">
        <input
          type="checkbox"
          defaultChecked={checked}
          disabled={disabled}
          className="peer h-[13px] w-[13px] appearance-none border border-[#8a8e94] bg-[#d3d9e2] inset-ring-2 inset-ring-[#e8ebef]"
        />
        <svg viewBox="0 0 13 13" className="pointer-events-none absolute inset-0 hidden peer-checked:block">
          <path d="M3 6l2.500 4L10 3" fill="none" stroke="#4a6585" strokeWidth="2" />
        </svg>
      </span>
      {label}
    </label>
  );
}

function GroupHeader({ title, className = "" }) {
  return (
    <h3 className={`flex h-6 shrink-0 items-center gap-1.5 border border-[#b9bec8] bg-[#fcfcfc] pl-1 text-[13px] font-bold text-[#333] ${className}`}>
      <svg viewBox="0 0 9 8" className="h-2 w-[9px]"><path d="M0 0h9L4.500 8z" fill="#3c4147" /></svg>
      {title}
    </h3>
  );
}

function SidePanel() {
  return (
    <aside className="flex w-[359px] shrink-0 flex-col">
      <div className="flex h-5 items-center pl-1 pr-2 text-[#3a3d40]">
        全剖视图
        <svg viewBox="0 0 9 8" className="ml-auto mr-2.5 h-2 w-[9px]"><path d="M.500 .500h8v7h-8zM3 3h3v2H3z" fill="#fff" stroke="#7d8185" /></svg>
        <svg viewBox="0 0 12 11" className="h-[11px] w-3"><path d="M1 .500h3l2 3 2-3h3l-3 5 3 5H8l-2-3-2 3H1l3-5z" fill="#fff" stroke="#85898d" /></svg>
      </div>
      <div className="flex min-h-0 flex-1 pl-0.5 pr-px">
        <div className="flex w-[29px] shrink-0 flex-col items-center">
          <button aria-label="全剖视图" className="flex h-[47px] w-full items-center justify-center border border-r-0 border-[#b9bec8] bg-white">
            <Icon name="section" className="h-6 w-6" />
          </button>
          <button aria-label="布局" className="mt-3">
            <Icon name="book" className="h-6 w-6" />
          </button>
        </div>
        <div className="mb-1 flex min-w-0 flex-1 flex-col border border-[#b5bac0] border-l-[#c5c9ce]">
          <div className="flex h-[29px] shrink-0 items-center gap-0.5 pl-[3px] pr-[3px]">
            <button aria-label="确定" className="flex h-6 w-7 items-center justify-center border-2 border-[#d9a928] bg-white">
              <Icon name="check" />
            </button>
            <button aria-label="取消" className="flex h-6 w-7 items-center justify-center border border-[#b9bec8] bg-white">
              <Icon name="cross" className="h-[18px] w-[18px]" />
            </button>
            <button aria-label="信息" className="ml-auto flex h-6 w-7 items-center justify-center border border-[#b9bec8] bg-white">
              <Icon name="info" />
            </button>
            <button aria-label="展开" className="flex h-6 w-3.5 items-center justify-center border border-[#b9bec8] bg-white">
              <Icon name="expand" className="h-4 w-3" />
            </button>
          </div>
          <div className="flex min-h-0 flex-1">
            <div className="mb-px flex min-w-0 flex-1 flex-col overflow-hidden pl-[5px] text-black">
              <GroupHeader title="剖面线" className="-mt-4" />
              <div className="mb-0.5 shrink-0 border border-t-0 border-[#b9bec8] bg-[#dde1e8] pb-0.5 pl-[7px] pr-[9px] pt-[5px]">
                <div className="flex h-6 items-center">
                  <label htmlFor="view-label" className="w-24">视图标签</label>
                  <input id="view-label" defaultValue="A" className="h-[22px] min-w-0 flex-1 border border-[#b5bac6] bg-white px-0.5 outline-none" />
                </div>
                <Check label="反转箭头" checked className="h-[22px]" />
                <Check label="显示阶梯线" className="h-[21px]" />
              </div>
              <GroupHeader title="剖面选项" />
              <div className="flex min-h-0 flex-1 flex-col border border-t-0 border-[#b9bec8] bg-[#dde1e8] pb-1 pl-[7px] pr-2 pt-px">
                <div className="flex h-[26px] shrink-0 items-center">
                  <label htmlFor="pick-mode" className="w-36">对象选择模式</label>
                  <Picker id="pick-mode" value="排除" disabled className="h-5 flex-1" />
                </div>
                <Check label="显示造型" disabled className="h-[26px] shrink-0" />
                <div className="flex h-[26px] shrink-0 items-center">
                  <label htmlFor="part-visible" className="w-36">零件可见性</label>
                  <Picker id="part-visible" value="来源父视图" className="h-[21px] flex-1" />
                </div>
                <Check label="组件剖切状态来源于零件" checked className="h-[26px] shrink-0" />
                <Check label="组件填充状态来源于零件" checked className="h-[25px] shrink-0" />
                <Check label="填充颜色来源于零件" className="h-[25px] shrink-0" />
                <ul className="mt-0.5 min-h-0 flex-1 overflow-hidden border border-[#b5bac6] bg-[#f7f7f7]">
                  <li className="flex h-[18px] items-center gap-1 border-b border-r border-[#d5d7da] bg-[#efefef] pl-4">
                    <Icon name="cube" />
                    山涧果子
                  </li>
                  {Array.from({ length: 10 }, (_, i) => (
                    <li key={i} className="h-[18px] odd:bg-[#efefef] even:bg-[#f7f7f7]" />
                  ))}
                </ul>
              </div>
            </div>
            <div className="ml-[3px] mr-1 flex w-[15px] shrink-0 flex-col items-center bg-[#d7dbe3]">
              <svg viewBox="0 0 9 5" className="mt-1.5 h-[5px] w-[9px] shrink-0"><path d="M0 5h9L4.500 0z" fill="#3c4147" /></svg>
              <div className="grow-[4] basis-0" />
              <div className="flex w-full grow-[5] basis-0 flex-col items-center justify-center gap-px border border-[#84898f] bg-[#e8ecef]">
                {[0, 1, 2, 3].map((n) => (
                  <span key={n} className="h-px w-2 bg-[#84898f]" />
                ))}
              </div>
              <svg viewBox="0 0 9 5" className="mb-1 mt-1.5 h-[5px] w-[9px] shrink-0"><path d="M0 0h9L4.500 5z" fill="#3c4147" /></svg>
            </div>
          </div>
        </div>
      </div>
    </aside>
  );
}

const colMarks = [540, 614, 688, 762, 837, 911, 985];
const rowMarks = [303, 373, 443, 513, 583];
const smallText = [
  [798, 596, "Mark"], [813, 596, "NO."], [853, 596, "File NO."], [873, 596, "Sign"], [893, 596, "Date"],
  [800, 606, "Designed"], [856, 606, "Standard"], [799, 626, "Check"], [800, 636, "Technology"], [856, 636, "Approved"],
];
const largeText = [
  [922, 608, "Drawing Mark"], [949, 608, "Weight"], [966, 608, "Scale"], [966, 622, "1:2"],
  [916, 635, "Sheet"], [929, 635, "1"], [941, 635, "of"], [952, 635, "1"], [941, 581, "Aluminum"], [1009, 601, "ABBT"],
];

function Sheet() {
  return (
    <svg viewBox="360 196 1002 471" className="absolute inset-0 h-full w-full" fill="none" aria-label="图纸">
      <rect x="466" y="233" width="594" height="420" fill="#efedee" stroke="#000" strokeWidth="1.500" />
      <rect x="480.500" y="247" width="565" height="391.500" stroke="#000" strokeWidth="2" />
      <g stroke="#000">
        {colMarks.map((x) => (
          <path key={x} d={`M${x}.5 233v14M${x}.5 638v15`} />
        ))}
        {rowMarks.map((y) => (
          <path key={y} d={`M466 ${y - 0.5}h14M1046 ${y - 0.5}h14`} />
        ))}
        <path d="M763 233v21M763 631v22M466 442.500h21M1038 442.500h22" strokeWidth="2" />
        <path d="M467 247V234h13M1046 234h13v13M1046 652h13v-14" strokeWidth="3" />
        <path d="M466.500 638v14" stroke="#444" strokeWidth="3" />
      </g>
      <g fill="#000" className="font-['Liberation_Mono'] text-[9px] font-bold" textAnchor="middle">
        {[1, 2, 3, 4, 5, 6, 7, 8].map((n) => (
          <Fragment key={n}>
            <text x={429 + n * 74.2} y="243">{n}</text>
            {n !== 4 && n !== 5 && <text x={429 + n * 74.2} y="649">{n}</text>}
          </Fragment>
        ))}
        {["A", "B", "C", "D", "E", "F"].map((c, i) => (
          <Fragment key={c}>
            <text x="473" y={271 + i * 70}>{c}</text>
            <text x="1052" y={271 + i * 70}>{c}</text>
          </Fragment>
        ))}
      </g>

      {/* title block */}
      <g stroke="#000">
        <path d="M791 569.500h113M791 579.500h113M791 618.500h113M791 628.500h113M904 625.500h71" />
        <path d="M913.500 613v13M922.500 613v13M931.500 613v13" />
        <path
          d="M791 638v-78.500h255M805.500 559.500v39.500M819.500 559.500v39.500M842 559.500v39.500M864.500 559.500V638M881.500 559.500V638M904 559.500V638M975 559.500V638M791 589h113M791 599h184M791 609h113M808.500 599v39M825 599v39M847.500 599v39M904 613h142M975 584.500h71M941.500 599v27M957.500 599v27"
          strokeWidth="1.700"
        />
        <path d="M692 638v7.500h141.500V638M706.500 638v7M720.500 638v7M734.500 638v7M749 638v7M777 638v7M791 638v7M805.500 638v7M819.500 638v7" strokeWidth="2" />
      </g>
      <g fill="#000" stroke="#000" strokeWidth=".3" className="font-['Liberation_Sans'] font-bold" textAnchor="middle">
        {smallText.map(([x, y, t]) => (
          <text key={`${x}-${y}`} x={x} y={y} className="text-[4px]">{t}</text>
        ))}
        {largeText.map(([x, y, t]) => (
          <text key={`${x}-${y}`} x={x} y={y} className="text-[5px]">{t}</text>
        ))}
      </g>

      {/* section preview */}
      <path
        d="M667.500 277.500H774M692 291.500h57M692 305.500h57M667.500 333.700H774M735 348H522.700v42H774M522.700 369h134.600v-21M720.700 277v113M629 348v42M643 369v21M543 369v21M557.300 369v21M629 358.300h28M543 379.700h14M629 379.700h14"
        stroke="#0a8cfb"
        strokeWidth="2"
      />
      <path d="M643 333.500h10M648 329v10" stroke="#0b3bd0" strokeWidth="2" />
      <path d="M648 334v153" stroke="#b5b5b5" strokeWidth="2" strokeDasharray="12 4" />
      <text x="648" y="412" textAnchor="middle" fill="#0a8cfb" className="font-['Noto_Sans'] text-[13px] font-bold">A—A</text>

      {/* base view */}
      <rect x="514.500" y="424" width="267.500" height="122.500" stroke="#0637cf" strokeWidth="3.500" strokeDasharray="12 4" />
      <g stroke="#000" strokeWidth="1.800">
        <path d="M720.700 432.500H522.700V538.500h198M522.700 457H629a28.300 28.300 0 0 1 0 56.600H522.700" />
        <rect x="543" y="471" width="100.300" height="28.500" rx="14.200" />
        <circle cx="720.700" cy="485.300" r="53.200" />
        <circle cx="720.700" cy="485.300" r="28.500" />
        <circle cx="720.700" cy="485.300" r="14.200" />
      </g>
      <path d="M557.300 467v36M629 467v36M720.700 453v64" stroke="#2a2af2" strokeDasharray="14 2 3 2" />
      <path d="M510 485.500h276" stroke="#0a8cfb" strokeWidth="2.300" strokeDasharray="19 4 3 3 3 4" />
      <path d="M510.500 488v12M786 488v12" stroke="#0a8cfb" strokeWidth="1.500" />
      <circle cx="720.700" cy="485.300" r="2.300" fill="#777" stroke="#f01414" strokeWidth="2" />

      {/* origin triad and readout */}
      <path d="M466 653v-32" stroke="#0a9a12" strokeWidth="2" />
      <path d="M462 613l4 5v4M470 613l-4 5" stroke="#18e020" strokeWidth="1.500" />
      <path d="M466 652.700h30M496 648l8 11M504 648l-8 11" stroke="#f01414" strokeWidth="1.500" />
      <g fill="#000">
        <text x="365" y="663" className="text-[17px]">666.557mm</text>
        <text x="515" y="663" className="text-[16px]">比例：</text>
        <text x="568" y="663" className="text-[16px]">1:2</text>
      </g>
    </svg>
  );
}

const canvasTools = [
  ["exit"], ["eraser"], ["broom"], ["cubes"], ["axes"], ["grid", true], ["zoomPage", true],
  ["dimension", true], ["monitor", true], ["dotRing"], ["black"], ["layers", true],
];

function Canvas() {
  return (
    <main className="relative min-h-0 flex-1 overflow-hidden bg-gradient-to-b from-white to-[#a0a0a0]">
      <Sheet />
      <div className="relative flex items-start">
        <p className="w-[265px] shrink-0 whitespace-nowrap pl-[22px] pt-1 text-[11px] leading-[14px] text-black">
          &lt;单击中键&gt;继续.
          <br />
          &lt;F8&gt;或者&lt;Shift-roll&gt; 查找下一个有效的过滤器设置.
        </p>
        <div className="flex items-center pt-px">
          {canvasTools.map(([name, more]) => (
            <button
              key={name}
              aria-label={name}
              className={`flex h-6 items-center justify-start gap-1 px-1 ${more ? "w-[37px]" : "w-[25px]"} ${
                name === "cubes" ? "border border-[#c9a030] bg-[#ffe27a] px-[3px]" : ""
              }`}
            >
              <Icon name={name} />
              {more && <Arrow />}
            </button>
          ))}
          <div className="relative flex h-[22px] w-[115px] items-center border border-[#d3d6da] bg-[#efefef] pl-1.5 text-[#777]">
            <svg viewBox="0 0 30 16" className="h-4 w-[30px]"><path d="M6 1a4 4 0 0 1 2 7v4H4V8a4 4 0 0 1 2-7zM4 14h4" fill="#fff" stroke="#aaa" /><circle cx="23" cy="8" r="6" fill="#e3e3e3" stroke="#999" /></svg>
            <select aria-label="图层" disabled defaultValue="Layer0000" className="ml-0.5 w-16 appearance-none text-[11px] outline-none">
              <option>Layer0000</option>
            </select>
            <Arrow className="text-[#b5b8ba]" />
          </div>
        </div>
      </div>
    </main>
  );
}

function CloseMark() {
  return (
    <svg viewBox="0 0 10 9" className="h-[9px] w-2.5"><path d="M1 .500l8 8M9 .500l-8 8" stroke="#7a6236" strokeWidth="2.200" /></svg>
  );
}

function Plus() {
  return (
    <svg viewBox="0 0 10 10" className="h-2.5 w-2.5"><path d="M0 5h10M5 0v10" stroke="#9a9da0" strokeWidth="2" /></svg>
  );
}

function Workspace() {
  const nav = ["M1 0v8M7 0L2 4l5 4z", "M6 0L1 4l5 4z", "M2 0l5 4-5 4z", "M7 0v8M1 0l5 4-5 4z"];
  return (
    <div className="flex min-w-0 flex-1 flex-col border-l border-[#b9bec8]">
      <div className="flex h-[23px] border-b border-[#b9bec8] text-black">
        <button className="flex w-[157px] items-center gap-1 pl-[33px]">
          <span>* 山涧果子.Z3PRT</span>
          <CloseMark />
        </button>
        <button className="-mb-px flex w-[162px] items-center gap-1 border border-b-0 border-[#b9bec8] bg-[#fcfcfc] pl-[30px]">
          <span>* 山涧果子.Z3DRW</span>
          <CloseMark />
        </button>
        <button aria-label="新建" className="ml-1.5 flex items-center">
          <Plus />
        </button>
        <button aria-label="窗口列表" className="ml-auto flex w-4 flex-col items-center justify-center gap-px">
          <span className="h-px w-[7px] bg-[#555]" />
          <svg viewBox="0 0 7 4" className="h-1 w-[7px]"><path d="M.500 .500h6l-3 3z" fill="#fff" stroke="#555" /></svg>
        </button>
      </div>
      <Canvas />
      <div className="flex h-[23px] items-stretch">
        <div className="flex w-[60px] items-center justify-around">
          {nav.map((d) => (
            <button key={d} aria-label="翻页">
              <svg viewBox="0 0 8 8" className="h-[7px] w-[7px]"><path d={d} fill="#4a4d50" stroke="#4a4d50" strokeWidth=".7" /></svg>
            </button>
          ))}
        </div>
        <button className="mb-[3px] w-[54px] border border-t-0 border-[#b9bec8] bg-white text-black">图纸1</button>
        <button aria-label="添加图纸" className="ml-1.5 flex items-center">
          <Plus />
        </button>
      </div>
    </div>
  );
}

function StatusBar() {
  return (
    <footer className="flex h-6 shrink-0 items-stretch border-t border-[#c3c7cc]">
      <p className="w-[914px] border-r border-[#b9bec3] pl-1.5 pt-1.5 text-[#3a3d40]">&lt;单击中键&gt;完成。</p>
      <div className="flex items-center gap-3 pl-3.5 pr-[11px] pt-1">
        <button aria-label="管理器" className="flex h-5 w-[21px] items-center justify-center border border-[#c9962c] bg-[#ffe27a]">
          <Icon name="treeStatus" />
        </button>
        <button aria-label="显示器"><Icon name="pcStatus" /></button>
        <button aria-label="输出"><Icon name="listStatus" /></button>
      </div>
      <input aria-label="命令行" className="mt-[3px] min-w-0 flex-1 border border-[#a9aeb4] border-b-0 bg-white outline-none" />
    </footer>
  );
}

function NetMeter() {
  return (
    <div className="absolute bottom-0 right-0 flex h-[140px] w-[30px] flex-col items-center rounded-l-lg bg-gradient-to-b from-[#808184] via-[#77787b] to-[#b5b6bb] pl-1 pt-2.5 text-[11px] text-white">
      <span className="h-3 w-3 shrink-0 rounded-full border border-[#2a8f85] bg-[#03bf63]" />
      <span className="mt-4 flex h-[31px] w-2.5 shrink-0 items-end overflow-hidden rounded-full bg-[#8c8d91]">
        <span className="h-5 w-full bg-gradient-to-b from-[#e3ac1c] via-[#9cc63c] to-[#3ab8a8]" />
      </span>
      <span className="mt-4 leading-[10px]">0.0</span>
      <span className="flex items-center gap-1 text-[9px] leading-[14px] text-[#d5d5d8]">
        <svg viewBox="0 0 6 7" className="h-[7px] w-1.5"><path d="M3 0l3 4H4v3H2V4H0z" fill="#14a8ff" /></svg>
        K/s
      </span>
      <span className="pl-1 leading-[14px]">.1</span>
      <span className="flex items-center gap-0.5 text-[9px] leading-[14px] text-[#e8e8ea]">
        <svg viewBox="0 0 6 7" className="h-[7px] w-1.5"><path d="M3 7l3-4H4V0H2v3H0z" fill="#05b85c" /></svg>
        M/s
      </span>
    </div>
  );
}

export default function App() {
  return (
    <div className="relative flex h-screen min-h-[600px] flex-col overflow-hidden bg-[#e1e5e8] font-['Noto_Sans','Noto_Sans_CJK_SC',sans-serif] text-[12px] leading-4 text-[#222]">
      <TitleBar />
      <TabBar />
      <Ribbon />
      <ToolRow />
      <div className="flex min-h-0 flex-1">
        <SidePanel />
        <Workspace />
      </div>
      <StatusBar />
      <NetMeter />
      <p className="pointer-events-none absolute bottom-2 right-1 text-[26px] leading-8 text-white/70 [text-shadow:1px_1px_1px_#777]">
        CSDN @山涧果子
      </p>
    </div>
  );
}
